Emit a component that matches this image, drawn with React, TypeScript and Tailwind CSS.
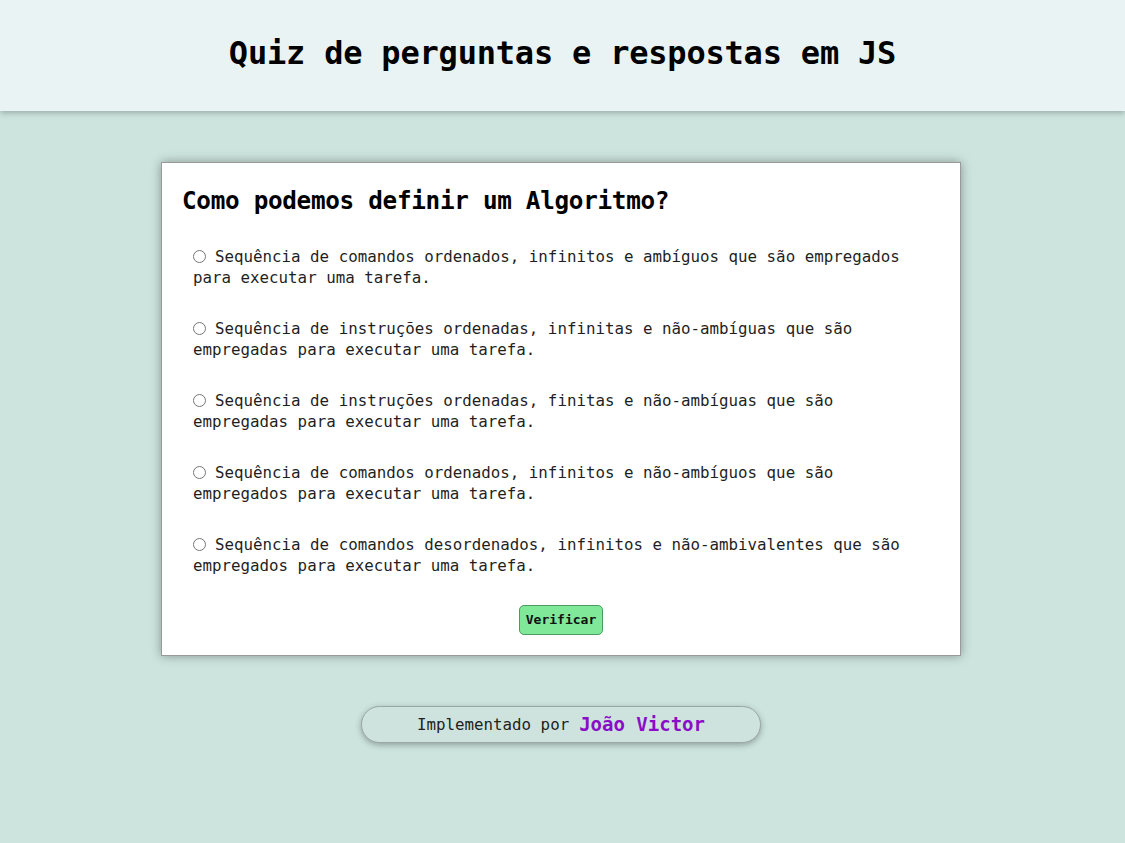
import { useState } from "react"

const options = [
  "Sequência de comandos ordenados, infinitos e ambíguos que são empregados para executar uma tarefa.",
  "Sequência de instruções ordenadas, infinitas e não-ambíguas que são empregadas para executar uma tarefa.",
  "Sequência de instruções ordenadas, finitas e não-ambíguas que são empregadas para executar uma tarefa.",
  "Sequência de comandos ordenados, infinitos e não-ambíguos que são empregados para executar uma tarefa.",
  "Sequência de comandos desordenados, infinitos e não-ambivalentes que são empregados para executar uma tarefa.",
]

export default function App() {
  const [selected, setSelected] = useState<number | null>(null)

  return (
    <div className="min-h-[843px] bg-[#cde4de] font-['DejaVu_Sans_Mono',monospace] text-[#1f1f1f]">
      <header className="h-[111px] bg-[#e9f3f4] flex items-center justify-center pb-[6px] shadow-[0_2px_6px_rgba(0,0,0,0.25)]">
        <h1 className="text-[32px] font-bold text-black tracking-[-0.2px]">Quiz de perguntas e respostas em JS</h1>
      </header>

      <main className="flex flex-col items-center pt-[51px] pr-[3px]">
        <div className="w-[800px] bg-white border border-[#9a9a9a] shadow-[0_0_10px_rgba(0,0,0,0.35)] px-[20px] pt-[20px] pb-[20px]">
          <h2 className="text-[24.3px] leading-[36px] font-bold text-black mb-[12px] tracking-[-0.3px]">
            Como podemos definir um Algoritmo?
          </h2>

          <div className="pl-[11px] pr-[30px]">
            {options.map((opt, i) => (
              <label key={i} className="block py-[15px] text-[15.8px] leading-[21px] cursor-pointer">
                <input
                  type="radio"
                  name="answer"
                  checked={selected === i}
                  onChange={() => setSelected(i)}
                  className="w-[13px] h-[13px] mr-[9px] align-[-1px] m-0"
                />
                {opt}
              </label>
            ))}
          </div>

          <div className="flex justify-center mt-[14px]">
            <button className="w-[84px] h-[30px] rounded-[5px] bg-[#7fe899] border border-[#4b9a5f] text-[13px] font-bold text-[#111]">
              Verificar
            </button>
          </div>
        </div>

        <div className="mt-[50px] w-[400px] h-[37px] rounded-full border border-[#9aa8a4] bg-[#cfe3de] shadow-[0_2px_6px_rgba(0,0,0,0.3)] flex items-center justify-center">
          <span className="text-[15.8px] text-[#222]">Implementado por </span>
          <span className="ml-[10px] text-[19px] font-bold text-[#8a0ec8]">João Victor</span>
        </div>
      </main>
    </div>
  )
}
